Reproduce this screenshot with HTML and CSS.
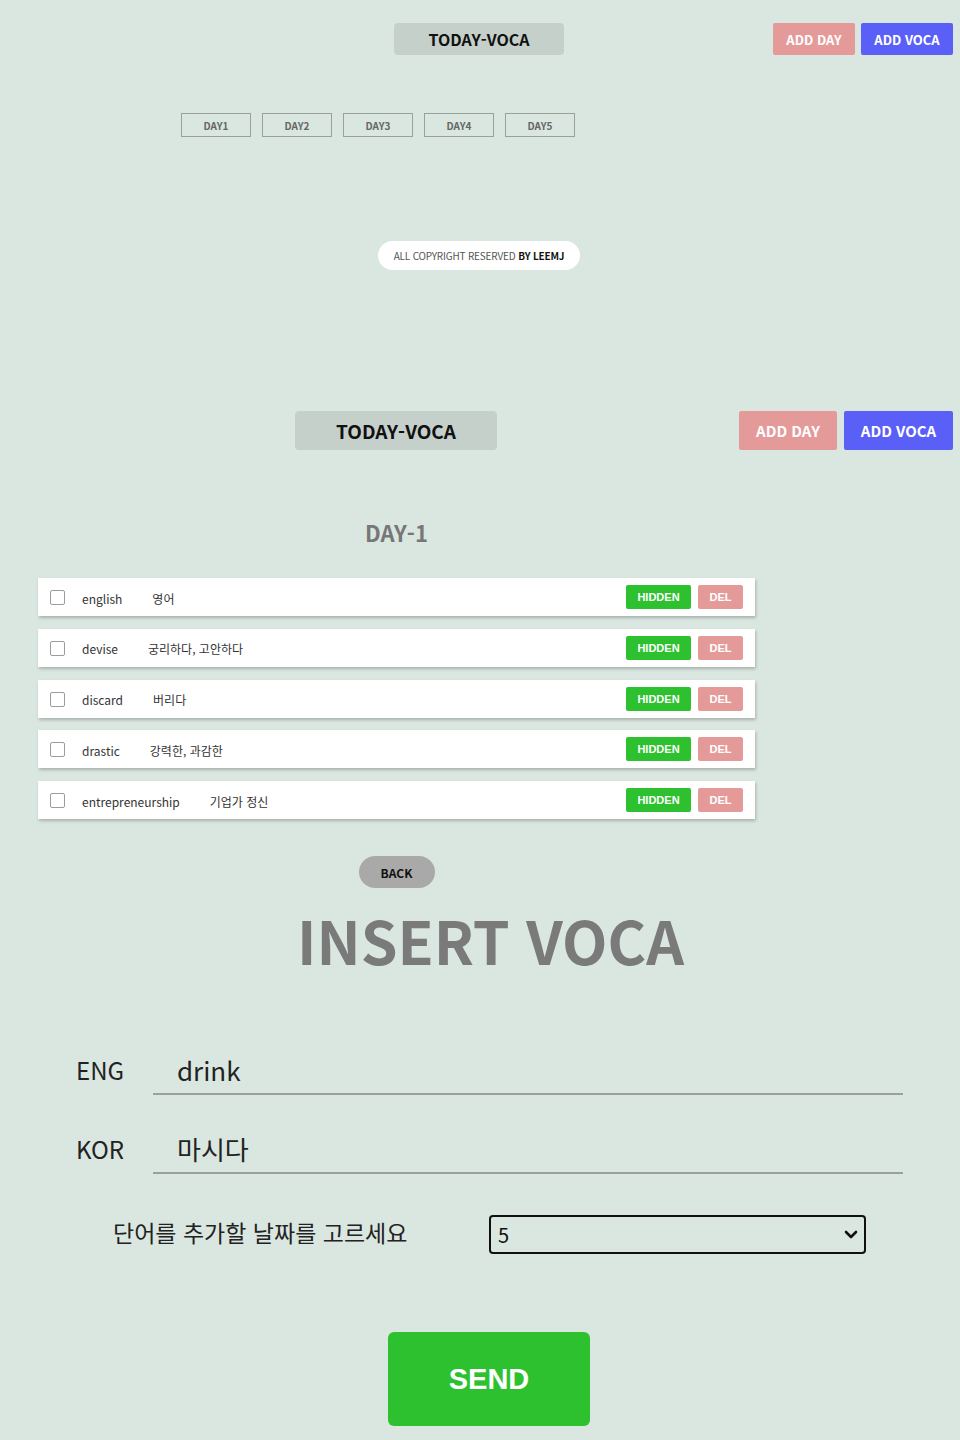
FILE: index.html
```html
<!DOCTYPE html>
<html lang="ko">
<head>
<meta charset="utf-8">
<title>TODAY-VOCA</title>
<link rel="stylesheet" href="styles.css">
</head>
<body>
<section class="home">
  <header class="hdr hdr-sm">
    <h1 class="brand">TODAY-VOCA</h1>
    <div class="menu">
      <a class="btn btn-day">ADD DAY</a>
      <a class="btn btn-voca">ADD VOCA</a>
    </div>
  </header>
  <nav class="days">
    <a class="day-link">DAY1</a>
    <a class="day-link">DAY2</a>
    <a class="day-link">DAY3</a>
    <a class="day-link">DAY4</a>
    <a class="day-link">DAY5</a>
  </nav>
  <footer class="copy">ALL COPYRIGHT RESERVED <b>BY LEEMJ</b></footer>
</section>

<section class="day-page">
  <header class="hdr hdr-lg">
    <h1 class="brand">TODAY-VOCA</h1>
    <div class="menu">
      <a class="btn btn-day">ADD DAY</a>
      <a class="btn btn-voca">ADD VOCA</a>
    </div>
  </header>
  <div class="day-body">
    <h2 class="day-title">DAY-1</h2>
    <ul class="words">
      <li class="word"><input type="checkbox" class="chk"><span class="eng">english</span><span class="kor">영어</span><span class="actions"><button class="b-hide">HIDDEN</button><button class="b-del">DEL</button></span></li>
      <li class="word"><input type="checkbox" class="chk"><span class="eng">devise</span><span class="kor">궁리하다, 고안하다</span><span class="actions"><button class="b-hide">HIDDEN</button><button class="b-del">DEL</button></span></li>
      <li class="word"><input type="checkbox" class="chk"><span class="eng">discard</span><span class="kor">버리다</span><span class="actions"><button class="b-hide">HIDDEN</button><button class="b-del">DEL</button></span></li>
      <li class="word"><input type="checkbox" class="chk"><span class="eng">drastic</span><span class="kor">강력한, 과감한</span><span class="actions"><button class="b-hide">HIDDEN</button><button class="b-del">DEL</button></span></li>
      <li class="word"><input type="checkbox" class="chk"><span class="eng">entrepreneurship</span><span class="kor">기업가 정신</span><span class="actions"><button class="b-hide">HIDDEN</button><button class="b-del">DEL</button></span></li>
    </ul>
    <button class="back">BACK</button>
  </div>
</section>

<section class="insert">
  <h1 class="insert-title">INSERT VOCA</h1>
  <form class="form">
    <label class="field"><span class="f-label">ENG</span><input class="f-input" type="text" value="drink"></label>
    <label class="field"><span class="f-label">KOR</span><input class="f-input" type="text" value="마시다"></label>
    <div class="pick">
      <span class="pick-label">단어를 추가할 날짜를 고르세요</span>
      <div class="sel-wrap">
        <select class="sel">
          <option>1</option><option>2</option><option>3</option><option>4</option><option selected>5</option>
        </select>
        <svg class="chev" width="14" height="10" viewBox="0 0 14 10"><path d="M2 2 L7 7 L12 2" fill="none" stroke="#111" stroke-width="2.6" stroke-linecap="round" stroke-linejoin="round"/></svg>
      </div>
    </div>
    <button class="send" type="button">SEND</button>
  </form>
</section>
</body>
</html>
```
FILE: styles.css
```css
* { box-sizing: border-box; }
html, body { margin: 0; padding: 0; }
body {
  background: #dae6e0;
  font-family: "Noto Sans CJK KR", "Noto Sans", sans-serif;
  color: #222;
  width: 960px;
  height: 1440px;
  overflow: hidden;
}
h1, h2, ul { margin: 0; padding: 0; }
a { text-decoration: none; }

/* header */
.hdr { display: flex; align-items: center; padding-right: 7px; }
.brand {
  background: #c5d0ca;
  border-radius: 4px;
  color: #111;
  font-weight: 700;
  text-align: center;
}
.menu { margin-left: auto; display: flex; gap: 6px; }
.btn {
  display: flex; align-items: center; justify-content: center;
  color: #fff; font-weight: 700; border-radius: 2px;
}
.btn-day { background: #e59a9a; }
.btn-voca { background: #5a5ff8; }

.home { padding-top: 23px; }
.hdr-sm { padding-left: 394px; }
.hdr-sm .brand { width: 170px; height: 32px; line-height: 32px; font-size: 16px; }
.hdr-sm .btn { height: 32px; font-size: 13px; }
.hdr-sm .btn-day { width: 82px; }
.hdr-sm .btn-voca { width: 92px; }

.days { display: flex; gap: 11px; margin: 58px 0 0 181px; }
.day-link {
  width: 70px; height: 24px;
  border: 1px solid #9aa19c;
  color: #666; font-size: 10px; font-weight: 700;
  display: flex; align-items: center; justify-content: center;
}

.copy {
  width: 202px; height: 29px;
  margin: 104px 0 0 378px;
  background: #fff; border-radius: 15px;
  font-size: 10px; color: #555;
  display: flex; align-items: center; justify-content: center;
  letter-spacing: -0.2px;
}
.copy b { color: #111; margin-left: 3px; }

/* day page */
.day-page { margin-top: 141px; }
.hdr-lg { padding-left: 295px; }
.hdr-lg .brand { width: 202px; height: 39px; line-height: 39px; font-size: 19px; }
.hdr-lg .btn { height: 39px; font-size: 15px; }
.hdr-lg .btn-day { width: 98px; }
.hdr-lg .menu { gap: 7px; }
.hdr-lg .btn-voca { width: 109px; }

.day-body { width: 793px; display: flex; flex-direction: column; align-items: center; }
.day-title { font-size: 22px; color: #777; font-weight: 700; margin-top: 67px; line-height: 30px; }
.words { list-style: none; width: 717px; margin-top: 31px; display: flex; flex-direction: column; gap: 12.75px; }
.word {
  height: 38px; background: #fff;
  display: flex; align-items: center;
  padding: 0 12px;
  box-shadow: 1px 2px 3px rgba(0,0,0,0.22);
}
.chk {
  appearance: none; -webkit-appearance: none;
  width: 15px; height: 15px; margin: 1px 17px 0 0;
  border: 1px solid #9c9c9c; border-radius: 2px; background: #fff;
}
.eng { font-size: 12px; color: #333; margin-top: 2px; }
.kor { font-size: 12px; color: #333; margin-left: 30px; margin-top: 2px; }
.actions { margin-left: auto; display: flex; gap: 7px; }
.actions button {
  border: 0; border-radius: 2px; height: 24px; color: #fff;
  font-family: "Liberation Sans", Arial, sans-serif; font-weight: 700; font-size: 11px;
  padding: 0;
}
.b-hide { background: #2ec12f; width: 65px; }
.b-del { background: #e59a9a; width: 45px; }

.back {
  margin-top: 37px;
  width: 76px; height: 32px; border-radius: 16px; border: 0;
  background: #a9a9a9; color: #111;
  font-family: "Noto Sans CJK KR", sans-serif; font-weight: 700; font-size: 12px;
}

/* insert */
.insert-title {
  text-align: center; padding-left: 21px;
  font-size: 59px; font-weight: 700; color: #7a7a7a;
  line-height: 80px; margin-top: 12px;
}
.form { display: flex; flex-direction: column; }
.field { display: flex; align-items: flex-end; margin-left: 76px; height: 44px; }
.field:first-child { margin-top: 71px; }
.field + .field { margin-top: 35px; }
.f-label { width: 77px; font-size: 24px; color: #222; line-height: 40px; padding-bottom: 5px; }
.f-input {
  width: 750px; height: 44px;
  border: 0; border-bottom: 2px solid #9aa09c;
  background: transparent;
  font-family: "Noto Sans CJK KR", sans-serif; font-size: 26px; color: #222;
  padding: 0 0 5px 24px; outline: none;
}
.pick { display: flex; align-items: center; margin: 41px 0 0 113px; }
.pick-label { font-size: 23px; color: #222; width: 376px; margin-top: -6px; }
.sel-wrap { position: relative; width: 377px; height: 39px; }
.sel {
  appearance: none; -webkit-appearance: none;
  width: 100%; height: 100%;
  border: 2px solid #111; border-radius: 4px;
  background: transparent;
  font-family: "Noto Sans CJK KR", sans-serif; font-size: 20px; color: #111;
  padding: 0 0 0 7px;
}
.chev { position: absolute; right: 8px; top: 15px; }
.send {
  margin: 78px 0 0 388px;
  width: 202px; height: 94px; border: 0; border-radius: 6px;
  background: #2ec12f; color: #fff;
  font-family: "Liberation Sans", Arial, sans-serif; font-weight: 700; font-size: 29px;
}
```
